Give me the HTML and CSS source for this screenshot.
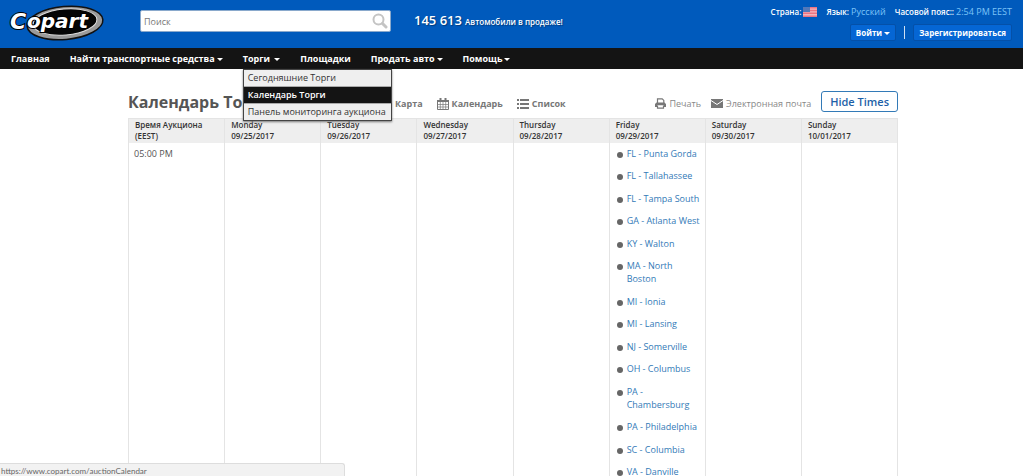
FILE: index.html
```
<!DOCTYPE html>
<html lang="ru">
<head>
	<meta charset="UTF-8">
	<title>Календарь Торги</title>
	<link rel="stylesheet" href="styles.css">
</head>
<body>
	<header class="header">
		<a class="logo" href="#" aria-label="Copart">
			<svg width="96" height="38" viewBox="0 0 96 38">
				<ellipse cx="56" cy="19" rx="38" ry="16.5" transform="rotate(-5 56 19)" fill="#9a9a9a" stroke="#111" stroke-width="1.5"/>
				<ellipse cx="56" cy="18" rx="32" ry="13" transform="rotate(-5 56 18)" fill="#050505" stroke="#ddd" stroke-width="1"/>
				<text class="logo-text" x="1" y="25">C</text>
				<text class="logo-text small" x="18" y="24">opart</text>
			</svg>
		</a>
		<form class="search">
			<input type="text" placeholder="Поиск" aria-label="Поиск">
			<button type="button" aria-label="Найти">
				<svg width="16" height="16" viewBox="0 0 16 16" fill="none" stroke="#c4c4c4">
					<circle cx="6.5" cy="6.5" r="5" stroke-width="2"/>
					<path d="M10.5 10.5L14 14" stroke-width="3" stroke-linecap="round"/>
				</svg>
			</button>
		</form>
		<p class="total"><strong>145 613</strong> Автомобили в продаже!</p>
		<div class="user">
			<div class="locale">
				<span>Страна:
					<svg class="flag" width="14" height="10" viewBox="0 0 14 10">
						<rect width="14" height="10" fill="#f4b5bd"/>
						<path d="M0 .7h14M0 3.5h14M0 6.3h14M0 9.2h14" stroke="#ec7583" stroke-width="1.4"/>
						<rect width="7" height="5" fill="#5378b8"/>
					</svg>
				</span>
				<span>Язык: <a href="#">Русский</a></span>
				<span>Часовой пояс:: <a href="#">2:54 PM EEST</a></span>
			</div>
			<div class="account">
				<button type="button">Войти <i class="caret"></i></button>
				<span class="divider"></span>
				<button type="button">Зарегистрироваться</button>
			</div>
		</div>
	</header>

	<nav class="nav">
		<ul>
			<li><a href="#">Главная</a></li>
			<li><a href="#">Найти транспортные средства<i class="caret"></i></a></li>
			<li class="open">
				<a href="#">Торги <i class="caret"></i></a>
				<ul class="menu">
					<li><a href="#">Сегодняшние Торги</a></li>
					<li><a class="select" href="#">Календарь Торги</a></li>
					<li><a href="#">Панель мониторинга аукциона</a></li>
				</ul>
			</li>
			<li><a href="#">Площадки</a></li>
			<li><a href="#">Продать авто<i class="caret"></i></a></li>
			<li><a href="#">Помощь<i class="caret"></i></a></li>
		</ul>
	</nav>

	<main class="content">
		<div class="toolbar">
			<h1>Календарь Торги</h1>
			<div class="views">
				<a href="#">
					<svg width="12" height="12" viewBox="0 0 12 12" fill="#777"><path d="M0 2l4-2v10l-4 2zM5 0l3 2v10l-3-2zM9 2l3-2v10l-3 2z"/></svg>
					Карта
				</a>
				<a href="#">
					<svg width="12" height="12" viewBox="0 0 12 12" fill="none" stroke="#777">
						<path d="M.5 2.5h11v9H.5z"/>
						<path d="M0 3h12" stroke-width="2"/>
						<path d="M3.5 0v3M8.5 0v3" stroke-width="2"/>
						<path d="M3.3 4v8M6 4v8M8.7 4v8M0 6.5h12M0 9h12" stroke-width=".7"/>
					</svg>
					Календарь
				</a>
				<a href="#">
					<svg width="12" height="10" viewBox="0 0 12 10" fill="#777"><path d="M0 0h2v2H0zM3 0h9v2H3zM0 4h2v2H0zM3 4h9v2H3zM0 8h2v2H0zM3 8h9v2H3z"/></svg>
					Список
				</a>
			</div>
			<div class="actions">
				<a href="#">
					<svg width="11" height="11" viewBox="0 0 11 11">
						<path d="M2.5 5V.8h4.7l1.6 1.6V5" fill="none" stroke="#777" stroke-width="1.2"/>
						<path d="M1.5 4.5h8L11 6v3H9V7.5H2V9H0V6z" fill="#777"/>
						<path d="M2.5 7.5v2.7h6V7.5" fill="#fff" stroke="#777" stroke-width="1.2"/>
					</svg>
					Печать
				</a>
				<a href="#">
					<svg width="12" height="9" viewBox="0 0 12 9"><path d="M0 0h12v9H0z" fill="#777"/><path d="M0 1.5l6 4 6-4" fill="none" stroke="#fff"/></svg>
					Электронная почта
				</a>
			</div>
			<button class="times" type="button">Hide Times</button>
		</div>

		<table class="calendar">
			<thead>
				<tr>
					<th>Время Аукциона (EEST)</th>
					<th>Monday<br>09/25/2017</th>
					<th>Tuesday<br>09/26/2017</th>
					<th>Wednesday<br>09/27/2017</th>
					<th>Thursday<br>09/28/2017</th>
					<th>Friday<br>09/29/2017</th>
					<th>Saturday<br>09/30/2017</th>
					<th>Sunday<br>10/01/2017</th>
				</tr>
			</thead>
			<tbody>
				<tr>
					<td>05:00 PM</td>
					<td></td>
					<td></td>
					<td></td>
					<td></td>
					<td>
						<ul class="yards">
							<li><a href="#">FL - Punta Gorda</a></li>
							<li><a href="#">FL - Tallahassee</a></li>
							<li><a href="#">FL - Tampa South</a></li>
							<li><a href="#">GA - Atlanta West</a></li>
							<li><a href="#">KY - Walton</a></li>
							<li><a href="#">MA - North Boston</a></li>
							<li><a href="#">MI - Ionia</a></li>
							<li><a href="#">MI - Lansing</a></li>
							<li><a href="#">NJ - Somerville</a></li>
							<li><a href="#">OH - Columbus</a></li>
							<li><a href="#">PA - Chambersburg</a></li>
							<li><a href="#">PA - Philadelphia</a></li>
							<li><a href="#">SC - Columbia</a></li>
							<li><a href="#">VA - Danville</a></li>
						</ul>
					</td>
					<td></td>
					<td></td>
				</tr>
			</tbody>
		</table>
	</main>

	<div class="status">https://www.copart.com/auctionCalendar</div>
</body>
</html>
```

FILE: styles.css
```
* {
	box-sizing: border-box;
}

body, ul, li, h1, p {
	margin: 0;
	padding: 0;
}

body {
	height: 100vh;
	overflow: hidden;
	background-color: #fff;
	color: #555;
	font-family: "Open Sans", "Noto Sans", sans-serif;
	font-size: 9px;
}

ul {
	list-style: none;
}

a {
	color: inherit;
	text-decoration: none;
}

button, input {
	font-family: inherit;
}

button {
	cursor: pointer;
}

.caret {
	display: inline-block;
	border: 3px solid transparent;
	border-top-color: #fff;
	border-bottom: 0;
	vertical-align: middle;
}

/* header */
.header {
	display: flex;
	height: 48px;
	padding: 0 11px 0 9px;
	background-color: #005abc;
	color: #fff;
}

.logo {
	width: 131px;
	padding-top: 4px;
}

.logo svg {
	display: block;
}

.logo-text {
	font: italic bold 22px "DejaVu Sans", sans-serif;
	fill: #fff;
	stroke: #000;
	stroke-width: 2px;
	paint-order: stroke;
}

.logo-text.small {
	font-size: 20px;
}

.search {
	display: flex;
	align-items: center;
	width: 251px;
	height: 22px;
	margin-top: 10px;
	border: 1px solid #8aa9cc;
	border-radius: 2px;
	background-color: #fff;
}

.search input {
	flex: 1;
	min-width: 0;
	padding: 0 3px;
	border: 0;
	background: none;
	font-size: 9px;
}

.search input::placeholder {
	color: #777;
}

.search button {
	display: flex;
	padding: 0 2px;
	border: 0;
	background: none;
}

.total {
	margin: 10px 0 0 23px;
	font-size: 8px;
	font-weight: 600;
	line-height: 20px;
	text-shadow: 1px 1px 1px #023c7c;
	white-space: nowrap;
}

.total strong {
	margin-right: 1px;
	font-size: 13px;
	font-weight: 600;
}

.user {
	margin-left: auto;
}

.locale {
	display: flex;
	justify-content: flex-end;
	gap: 9px;
	margin-top: 6px;
	font-size: 8px;
	font-weight: 600;
	line-height: 12px;
	white-space: nowrap;
}

.locale a {
	color: #7cc4f8;
	font-size: 9px;
	font-weight: 400;
}

.flag {
	vertical-align: -2px;
}

.account {
	display: flex;
	justify-content: flex-end;
	align-items: center;
	margin-top: 6px;
}

.account button {
	height: 17px;
	padding: 0 5px;
	border: 1px solid #0450a8;
	border-radius: 2px;
	background-color: #0566d4;
	color: #fff;
	font-size: 8px;
	font-weight: 700;
	line-height: 15px;
}

.divider {
	width: 1px;
	height: 13px;
	margin: 0 8px;
	background-color: #cfe0f3;
}

/* main navigation */
.nav {
	height: 21px;
	padding-left: 11px;
	background-color: #141414;
	color: #fff;
	font-size: 9px;
	font-weight: 700;
	line-height: 21px;
	white-space: nowrap;
}

.nav > ul {
	display: flex;
	gap: 20px;
}

.nav .caret {
	margin-left: 2px;
}

.open {
	position: relative;
}

.menu {
	position: absolute;
	top: 21px;
	left: 0;
	width: 149px;
	border: 1px solid #444;
	background-color: #efefef;
	box-shadow: 0 1px 2px #777;
	color: #333;
	font-size: 9px;
	font-weight: 400;
	line-height: 16px;
}

.menu li + li {
	border-top: 1px solid #aaa;
}

.menu a {
	display: block;
	padding: 0 4px;
}

.menu .select {
	background-color: #141414;
	color: #fff;
	font-weight: 600;
}

/* calendar */
.content {
	padding: 20px 125px 0 128px;
}

.toolbar {
	display: flex;
	align-items: center;
	height: 29px;
	padding-bottom: 4px;
	color: #777;
	white-space: nowrap;
}

.toolbar h1 {
	width: 252px;
	color: #555;
	font-size: 16px;
	font-weight: 700;
	line-height: 22px;
}

.toolbar a {
	display: flex;
	align-items: center;
	gap: 3px;
}

.views {
	display: flex;
	gap: 14px;
	padding-top: 4px;
	font-weight: 700;
}

.actions {
	display: flex;
	gap: 10px;
	margin-left: auto;
	padding-top: 4px;
	color: #888;
}

.times {
	height: 21px;
	margin-left: 10px;
	padding: 0 8px;
	border: 1px solid #337ab7;
	border-radius: 3px;
	background-color: #fff;
	color: #1d5fa8;
	font-size: 11px;
	font-weight: 600;
	line-height: 19px;
}

.calendar {
	width: 100%;
	height: 400px;
	border-collapse: collapse;
	table-layout: fixed;
}

.calendar th, .calendar td {
	border: 1px solid #e4e4e4;
	text-align: left;
	vertical-align: top;
}

.calendar th {
	height: 24px;
	padding: 0 6px;
	border-bottom: 0;
	background-color: #eee;
	color: #333;
	font-size: 8px;
	font-weight: 600;
	line-height: 11px;
}

.calendar td {
	padding: 4px 5px 0;
	border-top: 0;
	line-height: 13px;
}

.yards li {
	display: flex;
	align-items: flex-start;
	gap: 4px;
	margin: 0 0 9px 2px;
	color: #337ab7;
}

.yards li:nth-child(even) {
	margin-bottom: 10px;
}

.yards li:before {
	content: '';
	flex: none;
	width: 6px;
	height: 6px;
	margin-top: 5px;
	border-radius: 50%;
	background-color: #666;
}

/* link address shown at the bottom */
.status {
	position: fixed;
	bottom: 0;
	left: 0;
	width: 345px;
	height: 13px;
	padding-left: 1px;
	border: 1px solid #ddd;
	border-width: 1px 1px 0 0;
	border-radius: 0 3px 0 0;
	background-color: #f2f2f2;
	color: #666;
	font-family: Lato, sans-serif;
	font-size: 8px;
	line-height: 14px;
}
```
